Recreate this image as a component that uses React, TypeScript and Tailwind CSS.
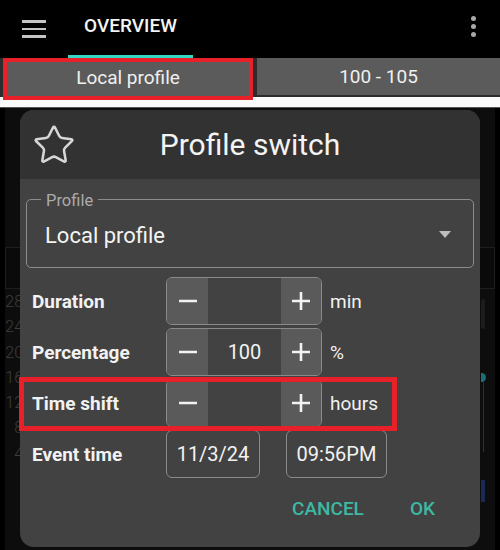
import React from 'react';
import { Star } from 'lucide-react';

const MinusIcon = () => (
    <svg width="20" height="20" viewBox="0 0 20 20">
        <line x1="1" y1="10" x2="19" y2="10" stroke="#f2f2f2" strokeWidth="2.4" />
    </svg>
);

const PlusIcon = () => (
    <svg width="20" height="20" viewBox="0 0 20 20">
        <line x1="1" y1="10" x2="19" y2="10" stroke="#f2f2f2" strokeWidth="2.6" />
        <line x1="10" y1="1" x2="10" y2="19" stroke="#f2f2f2" strokeWidth="2.6" />
    </svg>
);

const Stepper: React.FC<{ value?: string }> = ({ value }) => (
    <div className="flex h-[48px] w-[156px] overflow-hidden rounded-[6px] border border-[#8a8a8a]">
        <div className="flex w-[41px] items-center justify-center bg-[#5a5a5a]">
            <MinusIcon />
        </div>
        <div className="flex flex-1 items-center justify-center text-[20px] text-[#f2f2f2]">{value}</div>
        <div className="flex w-[40px] items-center justify-center bg-[#5a5a5a]">
            <PlusIcon />
        </div>
    </div>
);

const Row: React.FC<{ label: string; children: React.ReactNode }> = ({ label, children }) => (
    <div className="flex h-[48px] items-center">
        <div className="w-[146px] pl-[12px] pt-[3px] text-[19px] font-bold text-[#f2f2f2]">{label}</div>
        {children}
    </div>
);

const Unit: React.FC<{ children: React.ReactNode }> = ({ children }) => (
    <span className="ml-[8px] pt-[2px] text-[19px] text-[#f2f2f2]">{children}</span>
);

const axis = ['28', '24', '20', '16', '12', '8', '4'];

export default function App() {
    return (
        <div className="relative flex h-[550px] w-[500px] flex-col overflow-hidden bg-black font-[Roboto,sans-serif]">
            {/* toolbar */}
            <div className="flex h-[58px] items-stretch bg-black">
                <div className="flex w-[68px] flex-col items-center justify-center gap-[5px]">
                    <div className="h-[2.5px] w-[24px] bg-[#c4c4c4]" />
                    <div className="h-[2.5px] w-[24px] bg-[#c4c4c4]" />
                    <div className="h-[2.5px] w-[24px] bg-[#c4c4c4]" />
                </div>
                <div className="relative flex w-[125px] items-center justify-center pb-[6px] text-[19px] font-medium text-[#f4f4f4]">
                    OVERVIEW
                    <div className="absolute bottom-0 left-0 h-[3px] w-full bg-[#33d6c4]" />
                </div>
                <div className="ml-auto mr-[24px] flex flex-col items-center justify-center gap-[3px] pb-[6px]">
                    <div className="h-[5px] w-[5px] rounded-full bg-[#a8a8a8]" />
                    <div className="h-[5px] w-[5px] rounded-full bg-[#a8a8a8]" />
                    <div className="h-[5px] w-[5px] rounded-full bg-[#a8a8a8]" />
                </div>
            </div>

            {/* profile tabs */}
            <div className="flex h-[39px] items-start bg-[#2c2c2c]">
                <div className="ml-[3px] flex h-[39px] w-[250px] items-center justify-center bg-[#5b5b5b] pt-[2px] text-[19px] text-[#f0f0f0]">
                    Local profile
                </div>
                <div className="ml-[4px] flex h-[37px] flex-1 items-center justify-center bg-[#5b5b5b] pt-[2px] text-[19px] text-[#f0f0f0]">
                    100 - 105
                </div>
            </div>
            <div className="h-[11px] border-b border-[#555] bg-[#fafafa]" />

            {/* overview content behind the dialog */}
            <div className="flex flex-1 flex-col bg-black px-[5px]">
                <div className="flex flex-1 flex-col bg-[#0d0d0d]">
                    <div className="h-[139px]" />
                    <div className="h-[42px] border border-[#1e1e1e] bg-[#0a0a0a]" />
                    <div className="flex flex-1 justify-between">
                        <div className="flex w-[18px] flex-col items-end text-[16px] font-light leading-[25.3px] text-[#3e3e3e]">
                            {axis.map((n) => (
                                <div key={n}>{n}</div>
                            ))}
                        </div>
                        <div className="flex w-[14px] flex-col items-start">
                            <div className="mt-[10px] h-[30px] w-[4px] rounded-[2px] bg-[#1c1c1c]" />
                            <div className="mt-[44px] h-[9px] w-[5px] rounded-r-full bg-[#1b6f78]" />
                            <div className="ml-[2px] h-[70px] w-[1px] bg-[#1d3f1d]" />
                            <div className="mt-[28px] h-[22px] w-[4px] bg-[#1a2a55]" />
                        </div>
                    </div>
                </div>
            </div>

            {/* dialog */}
            <div className="absolute left-[20px] top-[110px] flex h-[437px] w-[460px] flex-col overflow-hidden rounded-[14px] bg-[#424242]">
                <div className="relative flex h-[69px] items-center justify-center bg-[#323232]">
                    <Star size={44} strokeWidth={1.4} color="#d6d6d6" className="absolute left-[12px] top-[13px]" />
                    <span className="text-[30px] text-[#f4f4f4]">Profile switch</span>
                </div>

                <div className="flex flex-col px-[6px] pt-[20px]">
                    <div className="relative flex h-[69px] items-center rounded-[5px] border border-[#8c8c8c] pl-[18px] pr-[22px]">
                        <span className="absolute -top-[9px] left-[14px] bg-[#424242] px-[5px] text-[16.5px] leading-[20px] text-[#ababab]">
                            Profile
                        </span>
                        <span className="pt-[4px] text-[22px] text-[#f4f4f4]">Local profile</span>
                        <svg className="ml-auto mt-[2px]" width="12" height="7" viewBox="0 0 12 7">
                            <polygon points="0,0 12,0 6,7" fill="#bdbdbd" />
                        </svg>
                    </div>
                </div>

                <div className="mt-[9px] flex flex-col gap-[3px]">
                    <Row label="Duration">
                        <Stepper />
                        <Unit>min</Unit>
                    </Row>
                    <Row label="Percentage">
                        <Stepper value="100" />
                        <Unit>%</Unit>
                    </Row>
                    <Row label="Time shift">
                        <Stepper />
                        <Unit>hours</Unit>
                    </Row>
                    <Row label="Event time">
                        <div className="flex h-[48px] w-[94px] items-center justify-center rounded-[6px] border border-[#8a8a8a] text-[20px] text-[#f2f2f2]">
                            11/3/24
                        </div>
                        <div className="ml-[26px] flex h-[48px] w-[101px] items-center justify-center rounded-[6px] border border-[#8a8a8a] text-[20px] text-[#f2f2f2]">
                            09:56PM
                        </div>
                    </Row>
                </div>

                <div className="mt-[17px] flex justify-end gap-[46px] pr-[45px] text-[19px] font-medium text-[#3db8a3]">
                    <span>CANCEL</span>
                    <span>OK</span>
                </div>
            </div>

            {/* red annotation boxes */}
            <div className="absolute left-[3px] top-[58px] h-[42px] w-[250px] border-[4px] border-[#e8202a]" />
            <div className="absolute left-[19px] top-[377px] h-[54px] w-[378px] border-[5px] border-[#e8202a]" />
        </div>
    );
}
